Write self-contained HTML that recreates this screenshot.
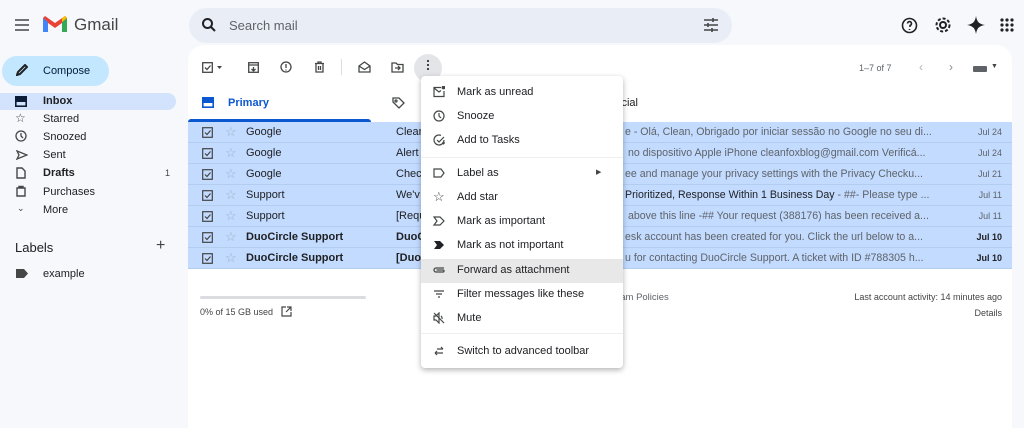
<!DOCTYPE html>
<html><head><meta charset="utf-8"><style>
*{margin:0;padding:0;box-sizing:border-box}
body{width:1024px;height:428px;overflow:hidden;background:#f6f8fc;font-family:"Liberation Sans",Arial,sans-serif;color:#202124;position:relative;font-size:11px}
.a{position:absolute}
.ic{position:absolute;stroke:#444746;fill:none;stroke-width:1.6}
.nav{position:absolute;left:43px;font-size:11px;color:#202124}
.row{position:absolute;left:188px;width:824px;height:21px;background:#c2dbff;border-bottom:1px solid #b3cdf0}
.row .cb{position:absolute;left:14px;top:5px}
.row .st{position:absolute;left:37px;top:2px;color:#a0b0c8;font-size:13px}
.row .fr{position:absolute;left:58px;top:4px;font-size:11px}
.row .sb{position:absolute;left:208px;top:4px;font-size:11px}
.row .sn{position:absolute;left:437px;top:4px;font-size:10.6px;color:#5f6368;white-space:nowrap}
.row .dt{position:absolute;right:10px;top:5px;font-size:9px;color:#5f6368}
.b{font-weight:bold;color:#202124!important}
.menu{position:absolute;left:421px;top:76px;width:202px;height:292px;background:#fff;border-radius:4px;box-shadow:0 2px 6px rgba(0,0,0,.3)}
.mi{position:absolute;left:36px;font-size:11px;color:#202124}
.mic{position:absolute;left:12px;width:12px;height:12px}
</style></head><body>
<svg class="ic" style="left:14px;top:18px" width="16" height="14"><path d="M1 2h14M1 7h14M1 12h14"/></svg>
<svg class="a" style="left:43px;top:15px" width="24" height="19" viewBox="0 0 24 19"><path d="M0 3v14h5V8l7 5 7-5v9h5V3l-2-2-10 7-10-7z" fill="#ea4335"/><path d="M0 3v14h5V7z" fill="#4285f4"/><path d="M19 7v10h5V3z" fill="#34a853"/><path d="M22 1l2 2-5 4V3z" fill="#fbbc04"/></svg>
<div class="a" style="left:74px;top:15px;font-size:17px;color:#444746">Gmail</div>
<div class="a" style="left:189px;top:8px;width:543px;height:35px;background:#e9eef6;border-radius:18px"></div>
<svg class="ic" style="left:202px;top:18px;stroke:#202124;stroke-width:2" width="14" height="14"><circle cx="5.5" cy="5.5" r="4.5"/><path d="M9 9l4 4"/></svg>
<div class="a" style="left:229px;top:18px;font-size:13px;color:#5f6368">Search mail</div>
<svg class="ic" style="left:703px;top:18px" width="16" height="14"><path d="M1 2h14M1 7h14M1 12h14M10 0v4M5 5v4M9 10v4"/></svg>
<svg class="ic" style="left:901px;top:17px;stroke:#202124" width="17" height="17"><circle cx="8.5" cy="8.5" r="7"/><path d="M6.5 6.5a2 2 0 1 1 2.5 2v1.5M8.5 12v1"/></svg>
<svg class="ic" style="left:934px;top:16px;stroke:#202124;stroke-width:2" width="18" height="18"><circle cx="9" cy="9" r="3"/><circle cx="9" cy="9" r="6.5" stroke-dasharray="3 2"/></svg>
<svg class="a" style="left:967px;top:16px" width="18" height="18"><path d="M9 0C10 6 12 8 18 9C12 10 10 12 9 18C8 12 6 10 0 9C6 8 8 6 9 0z" fill="#202124"/></svg>
<svg class="a" style="left:1000px;top:18px" width="14" height="14" fill="#202124"><circle cx="2" cy="2" r="1.6"/><circle cx="7" cy="2" r="1.6"/><circle cx="12" cy="2" r="1.6"/><circle cx="2" cy="7" r="1.6"/><circle cx="7" cy="7" r="1.6"/><circle cx="12" cy="7" r="1.6"/><circle cx="2" cy="12" r="1.6"/><circle cx="7" cy="12" r="1.6"/><circle cx="12" cy="12" r="1.6"/></svg>
<div class="a" style="left:2px;top:56px;width:107px;height:30px;background:#c2e7ff;border-radius:15px"></div>
<svg class="ic" style="left:16px;top:64px;stroke:#202124;stroke-width:2" width="12" height="12"><path d="M1 11l1-3 7-7 2 2-7 7z"/></svg>
<div class="nav" style="top:65px;color:#001d35">Compose</div>
<div class="a" style="left:0;top:93px;width:176px;height:17px;background:#d3e3fd;border-radius:0 9px 9px 0"></div>
<svg class="a" style="left:15px;top:96px" width="12" height="11"><rect x="0.8" y="0.8" width="10.4" height="9.4" fill="none" stroke="#0b1c38" stroke-width="1.6"/><rect x="1" y="1" width="10" height="5" fill="#0b1c38"/></svg>
<div class="nav" style="top:95px;font-weight:bold">Inbox</div>
<div class="a" style="left:15px;top:111px;font-size:12px;color:#444">☆</div><div class="nav" style="top:113px">Starred</div>
<svg class="ic" style="left:15px;top:130px;stroke-width:1.3" width="12" height="12"><circle cx="6" cy="6" r="5"/><path d="M6 3v3l2 2"/></svg><div class="nav" style="top:131px">Snoozed</div>
<svg class="ic" style="left:16px;top:150px;stroke-width:1.3" width="12" height="10"><path d="M1 1l10 4-10 4 2-4z"/></svg><div class="nav" style="top:149px">Sent</div>
<svg class="ic" style="left:16px;top:167px;stroke-width:1.4" width="10" height="12"><path d="M1 1h5l3 3v7H1z"/></svg><div class="nav" style="top:167px;font-weight:bold">Drafts</div>
<div class="a" style="left:165px;top:168px;font-size:9px;color:#444">1</div>
<svg class="ic" style="left:16px;top:185px;stroke-width:1.4" width="10" height="12"><path d="M1 3h8v8H1zM3 3V1.5h4V3"/></svg><div class="nav" style="top:186px">Purchases</div>
<div class="a" style="left:17px;top:203px;font-size:9px;color:#444">&#8964;</div><div class="nav" style="top:204px">More</div>
<div class="a" style="left:15px;top:240px;font-size:13px">Labels</div>
<div class="a" style="left:156px;top:237px;font-size:16px;color:#444">+</div>
<svg class="a" style="left:16px;top:269px" width="12" height="9"><path d="M0 0h8l4 4.5-4 4.5H0z" fill="#444746"/></svg>
<div class="nav" style="top:268px">example</div>
<div class="a" style="left:188px;top:45px;width:824px;height:383px;background:#fff;border-radius:16px 16px 0 0"></div>
<svg class="ic" style="left:202px;top:62px;stroke-width:1.3" width="22" height="11"><rect x="0.7" y="0.7" width="9.6" height="9.6"/><path d="M3 5.5l2 2 3.5-4"/><path d="M15 4h5l-2.5 3z" fill="#444" stroke="none"/></svg>
<svg class="ic" style="left:248px;top:62px;stroke-width:1.3" width="11" height="11"><rect x="0.7" y="0.7" width="9.6" height="9.6"/><path d="M1 3h9M5.5 5v4M3.5 7l2 2 2-2"/></svg>
<svg class="ic" style="left:280px;top:61px;stroke-width:1.3" width="12" height="12"><circle cx="6" cy="6" r="5"/><path d="M6 3v4M6 8.5v1"/></svg>
<svg class="ic" style="left:314px;top:61px;stroke-width:1.3" width="11" height="12"><path d="M1 2.5h9M4 2.5V1h3v1.5M2 3v8h7V3M4.5 5v4M6.5 5v4"/></svg>
<div class="a" style="left:341px;top:59px;width:1px;height:16px;background:#ddd"></div>
<svg class="ic" style="left:358px;top:61px;stroke-width:1.3" width="13" height="12"><path d="M1 5l5.5-4 5.5 4v6H1zM1 5l5.5 3.5L12 5"/></svg>
<svg class="ic" style="left:391px;top:62px;stroke-width:1.3" width="13" height="11"><path d="M1 1h4l1.5 1.5H12V10H1zM4 6h5M7 4l2 2-2 2"/></svg>
<div class="a" style="left:414px;top:54px;width:28px;height:28px;border-radius:50%;background:#e3e5e8"></div>
<div class="a" style="left:427px;top:60px;width:2px;height:2px;background:#444;box-shadow:0 4px #444,0 8px #444"></div>
<div class="a" style="left:859px;top:63px;font-size:9px;color:#5f6368">1–7 of 7</div>
<div class="a" style="left:919px;top:60px;font-size:12px;color:#b0b0b0">‹</div>
<div class="a" style="left:949px;top:60px;font-size:12px;color:#888">›</div>
<div class="a" style="left:973px;top:66px;width:14px;height:6px;background:#5f6368;border-radius:1px"></div>
<div class="a" style="left:991px;top:63px;font-size:7px;color:#444">▼</div>
<svg class="a" style="left:202px;top:97px" width="12" height="11"><rect x="0.8" y="0.8" width="10.4" height="9.4" fill="none" stroke="#0b57d0" stroke-width="1.6"/><rect x="1" y="1" width="10" height="5" fill="#0b57d0"/></svg>
<div class="a" style="left:228px;top:97px;font-size:11px;color:#0b57d0;font-weight:bold">Primary</div>
<div class="a" style="left:188px;top:119px;width:183px;height:3px;background:#0b57d0;border-radius:3px 3px 0 0"></div>
<svg class="ic" style="left:392px;top:97px;stroke-width:1.3" width="13" height="13"><path d="M1 1h6l5 5-5 5-6-6z"/><circle cx="4" cy="4" r="1"/></svg>
<div class="a" style="left:608px;top:97px;font-size:11px;color:#202124">Social</div>
<svg width="0" height="0" style="position:absolute"><defs><symbol id="cb" viewBox="0 0 11 11"><rect x="0.7" y="0.7" width="9.6" height="9.6" fill="none" stroke="#444" stroke-width="1.2"/><path d="M3 5.5l2 2 3.5-4" fill="none" stroke="#444" stroke-width="1.2"/></symbol></defs></svg>
<div class="row" style="top:122px"><svg class="cb" width="11" height="11"><use href="#cb"/></svg><div class="st">☆</div><div class="fr">Google</div><div class="sb">Clean</div><div class="sn">e - Olá, Clean, Obrigado por iniciar sessão no Google no seu di...</div><div class="dt">Jul 24</div></div>
<div class="row" style="top:143px"><svg class="cb" width="11" height="11"><use href="#cb"/></svg><div class="st">☆</div><div class="fr">Google</div><div class="sb">Alert</div><div class="sn">&nbsp;no dispositivo Apple iPhone cleanfoxblog@gmail.com Verificá...</div><div class="dt">Jul 24</div></div>
<div class="row" style="top:164px"><svg class="cb" width="11" height="11"><use href="#cb"/></svg><div class="st">☆</div><div class="fr">Google</div><div class="sb">Chec</div><div class="sn">ee and manage your privacy settings with the Privacy Checku...</div><div class="dt">Jul 21</div></div>
<div class="row" style="top:185px"><svg class="cb" width="11" height="11"><use href="#cb"/></svg><div class="st">☆</div><div class="fr">Support</div><div class="sb">We'v</div><div class="sn"><span style="color:#202124">Prioritized, Response Within 1 Business Day</span> - ##- Please type ...</div><div class="dt">Jul 11</div></div>
<div class="row" style="top:206px"><svg class="cb" width="11" height="11"><use href="#cb"/></svg><div class="st">☆</div><div class="fr">Support</div><div class="sb">[Requ</div><div class="sn">&nbsp;above this line -## Your request (388176) has been received a...</div><div class="dt">Jul 11</div></div>
<div class="row" style="top:227px"><svg class="cb" width="11" height="11"><use href="#cb"/></svg><div class="st">☆</div><div class="fr b">DuoCircle Support</div><div class="sb b">DuoC</div><div class="sn">esk account has been created for you. Click the url below to a...</div><div class="dt b">Jul 10</div></div>
<div class="row" style="top:248px"><svg class="cb" width="11" height="11"><use href="#cb"/></svg><div class="st">☆</div><div class="fr b">DuoCircle Support</div><div class="sb b">[Duo</div><div class="sn">u for contacting DuoCircle Support. A ticket with ID #788305 h...</div><div class="dt b">Jul 10</div></div>
<div class="a" style="left:200px;top:296px;width:166px;height:3px;background:#dadce0;border-radius:2px"></div>
<div class="a" style="left:200px;top:307px;font-size:9px;color:#444">0% of 15 GB used</div>
<svg class="ic" style="left:281px;top:306px;stroke-width:1.2" width="11" height="11"><path d="M5 1H1v9h9V6M6 1h4v4M10 1L5 6"/></svg>
<div class="a" style="left:597px;top:292px;font-size:9.5px;color:#5f6368">Program Policies</div>
<div class="a" style="right:22px;top:292px;font-size:9px;color:#444">Last account activity: 14 minutes ago</div>
<div class="a" style="right:22px;top:308px;font-size:9px;color:#444">Details</div>
<div class="menu">
<div class="a" style="left:0;top:183px;width:202px;height:24px;background:#e8e8e8"></div>
<div class="a" style="left:0;top:81px;width:202px;height:1px;background:#eee"></div>
<div class="a" style="left:0;top:257px;width:202px;height:1px;background:#eee"></div>
<svg class="mic ic" style="top:10px;stroke-width:1.2" viewBox="0 0 12 12"><path d="M8 1.5H1v9h10V5M1 2l5 4 2-1.5"/><circle cx="10.5" cy="1.5" r="1.3" fill="#444"/></svg><div class="mi" style="top:10px">Mark as unread</div>
<svg class="mic ic" style="top:34px;stroke-width:1.2" viewBox="0 0 12 12"><circle cx="6" cy="6" r="5"/><path d="M6 3v3l2 2"/></svg><div class="mi" style="top:34px">Snooze</div>
<svg class="mic ic" style="top:58px;stroke-width:1.2" viewBox="0 0 12 12"><path d="M11 6a5 5 0 1 1-3-4.6M4 6l2 2 5-5M9 9h3M10.5 7.5v3"/></svg><div class="mi" style="top:58px">Add to Tasks</div>
<svg class="mic ic" style="top:91px;stroke-width:1.2" viewBox="0 0 12 12"><path d="M1 2h7l3 4-3 4H1z"/></svg><div class="mi" style="top:91px">Label as</div>
<div class="a" style="left:175px;top:92px;font-size:7px;color:#444">▶</div>
<div class="a" style="left:12px;top:113px;font-size:13px;color:#444">☆</div><div class="mi" style="top:115px">Add star</div>
<svg class="mic ic" style="top:139px;stroke-width:1.2" viewBox="0 0 12 12"><path d="M1 2h6l4 4-4 4H1l3-4z"/></svg><div class="mi" style="top:139px">Mark as important</div>
<svg class="mic" style="top:163px" viewBox="0 0 12 12"><path d="M1 2h6l4 4-4 4H1l3-4z" fill="#202124"/></svg><div class="mi" style="top:163px">Mark as not important</div>
<svg class="mic ic" style="top:188px;stroke-width:1.3" viewBox="0 0 12 12"><path d="M11 4H3a2 2 0 0 0 0 4h7a1 1 0 0 0 0-2H3.5"/></svg><div class="mi" style="top:188px">Forward as attachment</div>
<svg class="mic ic" style="top:212px;stroke-width:1.2" viewBox="0 0 12 12"><path d="M1 3h10M3 6h6M5 9h2"/></svg><div class="mi" style="top:212px">Filter messages like these</div>
<svg class="mic ic" style="top:236px;stroke-width:1.2" viewBox="0 0 12 12"><path d="M1 4h2l3-3v10L3 8H1zM1 1l10 10M8 4a3 3 0 0 1 1 3"/></svg><div class="mi" style="top:236px">Mute</div>
<svg class="mic ic" style="top:269px;stroke-width:1.2" viewBox="0 0 12 12"><path d="M2 8h8M2 8l2-2M2 8l2 2M10 4H4M10 4L8 2"/></svg><div class="mi" style="top:269px">Switch to advanced toolbar</div>
</div>
</body></html>
